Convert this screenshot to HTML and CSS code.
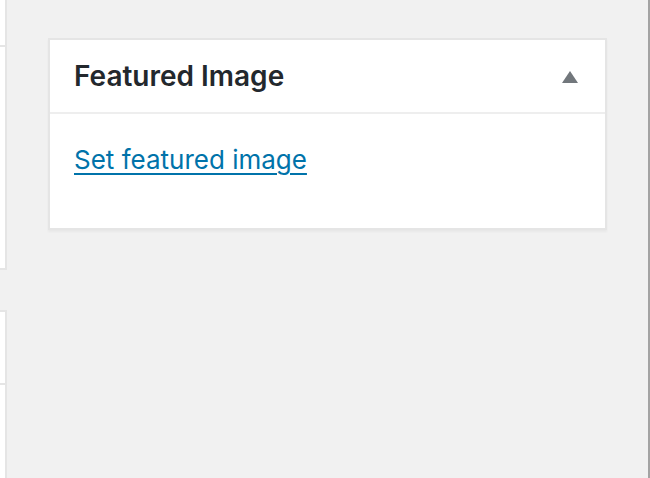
FILE: index.html
```html
<!DOCTYPE html>
<html>
<head>
<meta charset="utf-8">
<link rel="stylesheet" href="styles.css">
</head>
<body>
<div class="page">
  <div class="left-col">
    <div class="stub stub-top"><div class="stub-head"></div></div>
    <div class="stub stub-bottom"><div class="stub-head2"></div></div>
  </div>
  <div class="main">
    <div class="postbox">
      <div class="postbox-header">
        <h2 class="postbox-title">Featured Image</h2>
        <span class="toggle" aria-hidden="true"></span>
      </div>
      <div class="postbox-inside">
        <a class="set-link" href="#">Set featured image</a>
      </div>
    </div>
  </div>
  <div class="scroll-edge"></div>
</div>
</body>
</html>
```
FILE: styles.css
```css
html, body {
  margin: 0;
  padding: 0;
  height: 100%;
  overflow: hidden;
  background: #f1f1f1;
}
.page {
  display: flex;
  height: 478px;
  font-family: "Inter", "Liberation Sans", sans-serif;
}
.left-col {
  width: 7px;
  flex: none;
  display: flex;
  flex-direction: column;
  gap: 40px;
  margin-top: -10px;
}
.stub {
  background: #fff;
  border-right: 2px solid #e5e5e5;
  box-sizing: border-box;
}
.stub-top {
  height: 280px;
  border-bottom: 2px solid #e5e5e5;
}
.stub-head {
  height: 55px;
  border-bottom: 2px solid #e5e5e5;
}
.stub-bottom {
  flex: 1;
  border-top: 2px solid #e5e5e5;
}
.stub-head2 {
  height: 71px;
  border-bottom: 2px solid #e5e5e5;
}
.main {
  flex: 1;
  padding-left: 41px;
  padding-top: 38px;
}
.postbox {
  width: 559px;
  box-sizing: border-box;
  background: #fff;
  border: 2px solid #e5e5e5;
  box-shadow: 0 2px 2px rgba(0,0,0,0.04);
}
.postbox-header {
  height: 72px;
  border-bottom: 2px solid #eeeeee;
  display: flex;
  align-items: center;
  justify-content: space-between;
  padding: 0 27px 0 24px;
}
.postbox-title {
  margin: 0;
  font-size: 28px;
  font-weight: 600;
  color: #23282d;
  letter-spacing: 0;
}
.toggle {
  width: 0;
  height: 0;
  border-left: 8px solid transparent;
  border-right: 8px solid transparent;
  border-bottom: 12px solid #72777c;
  margin-top: 2px;
}
.postbox-inside {
  height: 114px;
  box-sizing: border-box;
  padding: 30px 24px 0 24px;
}
.set-link {
  font-size: 26px;
  color: #0073aa;
  text-decoration: underline;
  text-decoration-thickness: 2px;
  text-underline-offset: 4px;
}
.scroll-edge {
  width: 2px;
  flex: none;
  background: #a3a3a3;
}
```
